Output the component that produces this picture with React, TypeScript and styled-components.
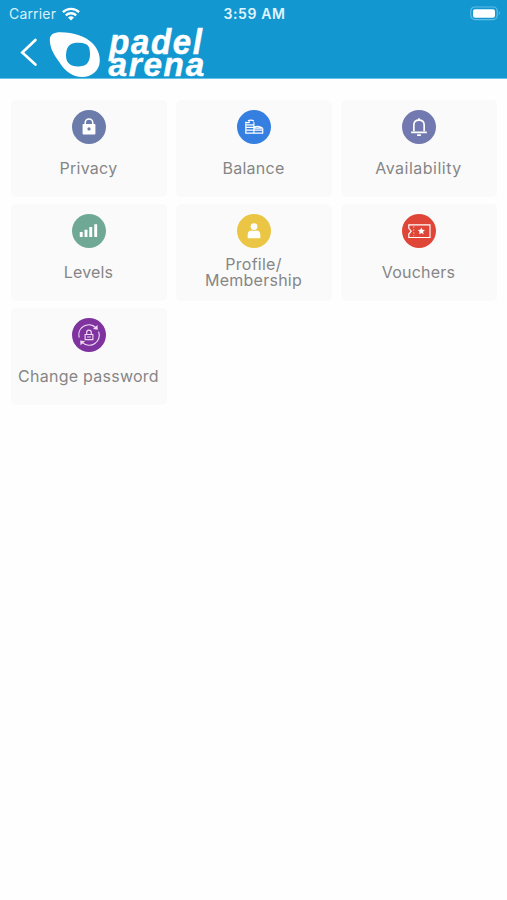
import React from 'react';
import styled, { createGlobalStyle } from 'styled-components';

const GlobalStyle = createGlobalStyle`
  * { box-sizing: border-box; }
  body { margin: 0; background: #fefefe; font-family: Inter, "Liberation Sans", sans-serif; }
`;

const Screen = styled.div`
  min-height: 900px;
  background: #fefefe;
`;

const Header = styled.header`
  height: 79px;
  background: #1297d1;
  border-bottom: 1px solid #65c3e8;
  color: #fff;
`;

const StatusBar = styled.div`
  height: 27px;
  padding: 0 6px 0 9px;
  display: grid;
  grid-template-columns: 1fr auto 1fr;
  align-items: center;
`;

const Carrier = styled.div`
  display: flex;
  align-items: center;
  gap: 6px;
  font-size: 14px;
  line-height: 20px;
  letter-spacing: 0.18px;
  color: #d9f1fb;
`;

const Clock = styled.div`
  font-size: 14px;
  line-height: 20px;
  font-weight: 600;
  letter-spacing: 0.6px;
  color: #e0f5fd;
  padding-right: 1px;
`;

const Battery = styled.svg`
  justify-self: end;
`;

const NavBar = styled.nav`
  display: flex;
  height: 51px;
  padding-left: 20px;
`;

const BackButton = styled.button`
  width: 28px;
  height: 49px;
  padding: 0;
  border: 0;
  background: none;
  display: flex;
  align-items: center;
`;

const LogoArt = styled.svg`
  overflow: visible;
`;

const Grid = styled.main`
  display: grid;
  grid-template-columns: repeat(3, 1fr);
  grid-auto-rows: 97px;
  gap: 7px 9px;
  padding: 20.5px 10.5px 0 10.5px;
`;

const Tile = styled.button`
  display: flex;
  flex-direction: column;
  align-items: center;
  padding: 10px 0 0;
  border: 0;
  border-radius: 5px;
  background: #fafafa;
  font-family: inherit;
`;

const Badge = styled.span<{ $color: string }>`
  width: 34px;
  height: 34px;
  flex: none;
  border-radius: 50%;
  background: ${(p) => p.$color};
  svg { display: block; }
`;

const Label = styled.span<{ $tracking: number }>`
  height: 48px;
  display: flex;
  align-items: center;
  justify-content: center;
  text-align: center;
  white-space: pre;
  font-size: 16px;
  line-height: 16px;
  font-weight: 400;
  letter-spacing: ${(p) => p.$tracking}px;
  color: #868686;
`;

const Icon = ({ children }: { children: React.ReactNode }) => (
  <svg width="34" height="34" viewBox="0 0 35 35" fill="none" stroke="#fff" strokeWidth="1.4">
    {children}
  </svg>
);

const LockIcon = () => (
  <Icon>
    <path d="M13.6 15.5v-2.4a3.9 3.9 0 0 1 7.8 0v2.4" strokeWidth="1.6" />
    <path fillRule="evenodd" stroke="none" fill="#fff" d="M11.7 14.5h11.6q.8 0 .8.8v9q0 .9-.9.9H11.8q-.9 0-.9-.9v-9q0-.8.8-.8Zm5.8 3.3a1.7 1.7 0 1 0 0 3.4a1.7 1.7 0 0 0 0-3.4Z" />
  </Icon>
);

const BalanceIcon = () => (
  <Icon>
    <path d="M9.1 24V12.2M17.4 24V12.6M26.5 24v-5.3" strokeWidth="1.2" />
    <path d="M9 12.6q2 1 4.3-.4M11.2 11q4-1.5 6.2.5M9 15.2h8.4M9 18h8.4M9 20.8h17.5M8.5 23.8h18.4M17.5 17.7q4.5-2 9 1.2M17.5 18.6h8" strokeWidth="1.3" />
  </Icon>
);

const BellIcon = () => (
  <Icon>
    <path d="M12.2 22v-6.5c0-3.2 2.3-5 5.3-5s5.3 1.8 5.3 5V22" strokeWidth="1.7" />
    <path d="M9.4 23h16.2M17.5 10.4V8.6M15.6 25.9h3.8" strokeWidth="1.8" />
  </Icon>
);

const LevelsIcon = () => (
  <Icon>
    <path d="M9.5 23.6v-5M14.4 23.6v-7.5M19.3 23.6v-10.2M24.4 23.6V10.6" strokeWidth="3" />
  </Icon>
);

const ProfileIcon = () => (
  <Icon>
    <circle cx="17.5" cy="12.9" r="3.5" fill="#fff" stroke="none" />
    <path d="M11 25v-3.4q0-4.6 4.3-4.6 2.2 1 4.4 0 4.3 0 4.3 4.6V25Z" fill="#fff" stroke="none" />
  </Icon>
);

const VoucherIcon = () => (
  <Icon>
    <path d="M7 11.2h21.8v13H7v-3.6l2.5-2.9L7 14.8Z" strokeWidth="1.2" />
    <path d="M12.1 12.5v10.5" strokeDasharray="1.8 1.3" strokeWidth="0.8" strokeOpacity=".7" />
    <path d="m19.9 13.8 1.1 2.4 2.6.3-1.9 1.8.5 2.6-2.3-1.3-2.3 1.3.5-2.6-1.9-1.8 2.6-.3Z" fill="#fff" stroke="none" />
  </Icon>
);

const PasswordIcon = () => (
  <Icon>
    <g stroke="#eed9f4" strokeWidth="1.2">
      <path d="M7.4 20.2a10.3 10.3 0 0 1 16.9-10.4M27.4 14a10.3 10.3 0 0 1-16.6 11.3" />
      <path d="m25.7 8.4.2 3-3-.4ZM9.3 26.8l-.2-3 3 .5Z" fill="#eed9f4" />
      <path d="M13.5 17h8v5.2h-8Zm1.6 0v-2.1a2.4 2.4 0 0 1 4.8 0V17M15.5 19.6h4" />
    </g>
  </Icon>
);

type Item = { label: string; color: string; icon: React.ReactNode; tracking: number };

const items: Item[] = [
  { label: 'Privacy', color: '#6b7cab', icon: <LockIcon />, tracking: 0.25 },
  { label: 'Balance', color: '#357fe0', icon: <BalanceIcon />, tracking: 0.25 },
  { label: 'Availability', color: '#7278b0', icon: <BellIcon />, tracking: 0.5 },
  { label: 'Levels', color: '#6fa995', icon: <LevelsIcon />, tracking: 0.15 },
  { label: 'Profile/\nMembership', color: '#ebc544', icon: <ProfileIcon />, tracking: 0.25 },
  { label: 'Vouchers', color: '#df4638', icon: <VoucherIcon />, tracking: 0.2 },
  { label: 'Change password', color: '#7f339f', icon: <PasswordIcon />, tracking: 0.25 },
];

const Logo = () => (
  <LogoArt width="164" height="52" viewBox="48 27 164 52" aria-label="padel arena">
    <path
      fillRule="evenodd"
      fill="#fff"
      d="M49.8 40.2C49.6 34.6 53.8 32.3 60.5 32.3C74 32.5 85.6 36.5 92.2 43C97.3 48 100.1 54.3 99.8 61.2C99.3 70.8 91.6 77 82 77C72.8 77 65 71.4 59.6 62.5C54.7 55.5 50.3 49.8 49.8 40.2ZM69.5 45.2C66.7 47.7 65.9 52.3 66.1 57.1C66.3 62.8 70.7 66.7 78 66.6C85.9 66.7 89.7 63 90 55.1C90.2 46.5 88.2 43.2 79.5 42.8C75.3 42.7 72 43 69.5 45.2Z"
    />
    <g
      fontFamily="Liberation Sans, Arial, sans-serif"
      fontSize="34"
      fontWeight="700"
      fontStyle="italic"
      fill="#fff"
      stroke="#fff"
      strokeWidth="0.5"
      strokeLinejoin="round"
    >
      <text transform="translate(109.3 53.6) scale(.97 1.03)" letterSpacing="1.7">padel</text>
      <text transform="translate(108.6 75.8) scale(.98 .98)" letterSpacing="1.7">arena</text>
    </g>
  </LogoArt>
);

export default function App() {
  return (
    <Screen>
      <GlobalStyle />
      <Header>
        <StatusBar>
          <Carrier>
            Carrier
            <svg width="18" height="14" viewBox="0 0 18 14" fill="none" stroke="#fff" strokeWidth="2.3">
              <path d="M.9 5.2a11.7 11.7 0 0 1 16.2 0M3.8 8.3a7.6 7.6 0 0 1 10.4 0" />
              <path d="M6 10.4q3-2.5 6 0l-3 3Z" fill="#fff" stroke="none" />
            </svg>
          </Carrier>
          <Clock>3:59 AM</Clock>
          <Battery width="31" height="16" viewBox="0 0 31 16">
            <rect x=".8" y="1" width="26.4" height="12.6" rx="4" fill="none" stroke="#62bce3" strokeWidth="1.2" />
            <rect x="3" y="3.3" width="22" height="8.5" rx="2" fill="#fff" />
            <path d="M28.8 5.1q2 2.1 0 4.4Z" fill="#62bce3" />
          </Battery>
        </StatusBar>
        <NavBar>
          <BackButton aria-label="Back">
            <svg width="18" height="28" viewBox="0 0 18 28" fill="none" stroke="#fff" strokeWidth="2.7" strokeLinecap="round">
              <path d="M15.4 2 2.3 14.4 15.4 26.5" />
            </svg>
          </BackButton>
          <Logo />
        </NavBar>
      </Header>
      <Grid>
        {items.map((item) => (
          <Tile key={item.label}>
            <Badge $color={item.color}>{item.icon}</Badge>
            <Label $tracking={item.tracking}>{item.label}</Label>
          </Tile>
        ))}
      </Grid>
    </Screen>
  );
}
